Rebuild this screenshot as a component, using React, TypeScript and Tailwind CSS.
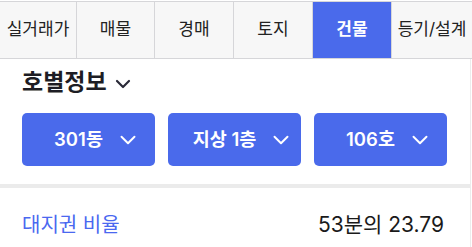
import { ChevronDown } from 'lucide-react';

const tabs = [
  { label: '실거래가', w: 'w-[77px]' },
  { label: '매물', w: 'w-[78px]' },
  { label: '경매', w: 'w-[79px]' },
  { label: '토지', w: 'w-[79px]' },
  { label: '건물', w: 'w-[79px]', active: true },
  { label: '등기/설계', w: 'flex-1' },
];

const selects = ['301동', '지상 1층', '106호'];

export default function App() {
  return (
    <div className="w-[472px] h-[247px] bg-white overflow-hidden font-['Inter','Noto_Sans_CJK_KR',sans-serif]">
      <div className="mt-px flex h-[58px] border-y border-[#d6d6d9] bg-[#f7f7f7]">
        {tabs.map((t) => (
          <div
            key={t.label}
            className={`${t.w} shrink-0 flex items-center justify-center whitespace-nowrap border-r border-[#d6d6d9] text-[17px] last:border-r-0 ${
              t.active ? 'bg-[#4a6aeb] text-white font-bold' : 'text-[#222]'
            }`}
          >
            {t.label}
          </div>
        ))}
      </div>

      <div className="w-[471px] border-r border-[#ececec]">
        <div className="px-[22px] pt-[9px]">
          <div className="flex items-center gap-[4px] h-[28px]">
            <span className="text-[23px] font-bold text-[#1d1d24]">호별정보</span>
            <ChevronDown className="w-[24px] h-[24px] text-[#2a2a38] mt-[3px]" strokeWidth={2.2} />
          </div>

          <div className="mt-[17px] flex gap-[13px]">
            {selects.map((s) => (
              <div
                key={s}
                className="w-[133px] h-[53px] rounded-[5px] bg-[#4a6aeb] flex items-center justify-center gap-[12px] pl-[18px] text-white"
              >
                <span className="text-[18.5px] font-semibold">{s}</span>
                <ChevronDown className="w-[26px] h-[26px]" strokeWidth={1.8} />
              </div>
            ))}
          </div>
        </div>

        <div className="mt-[18px] h-[4px] bg-[#ebebeb]" />

        <div className="flex items-center justify-between px-[22px] pr-[26px] h-[76px] pb-[2px]">
          <span className="text-[20px] text-[#4a68f0]">대지권 비율</span>
          <span className="text-[21px] text-[#1a1a1a]">53분의 23.79</span>
        </div>
      </div>
    </div>
  );
}
